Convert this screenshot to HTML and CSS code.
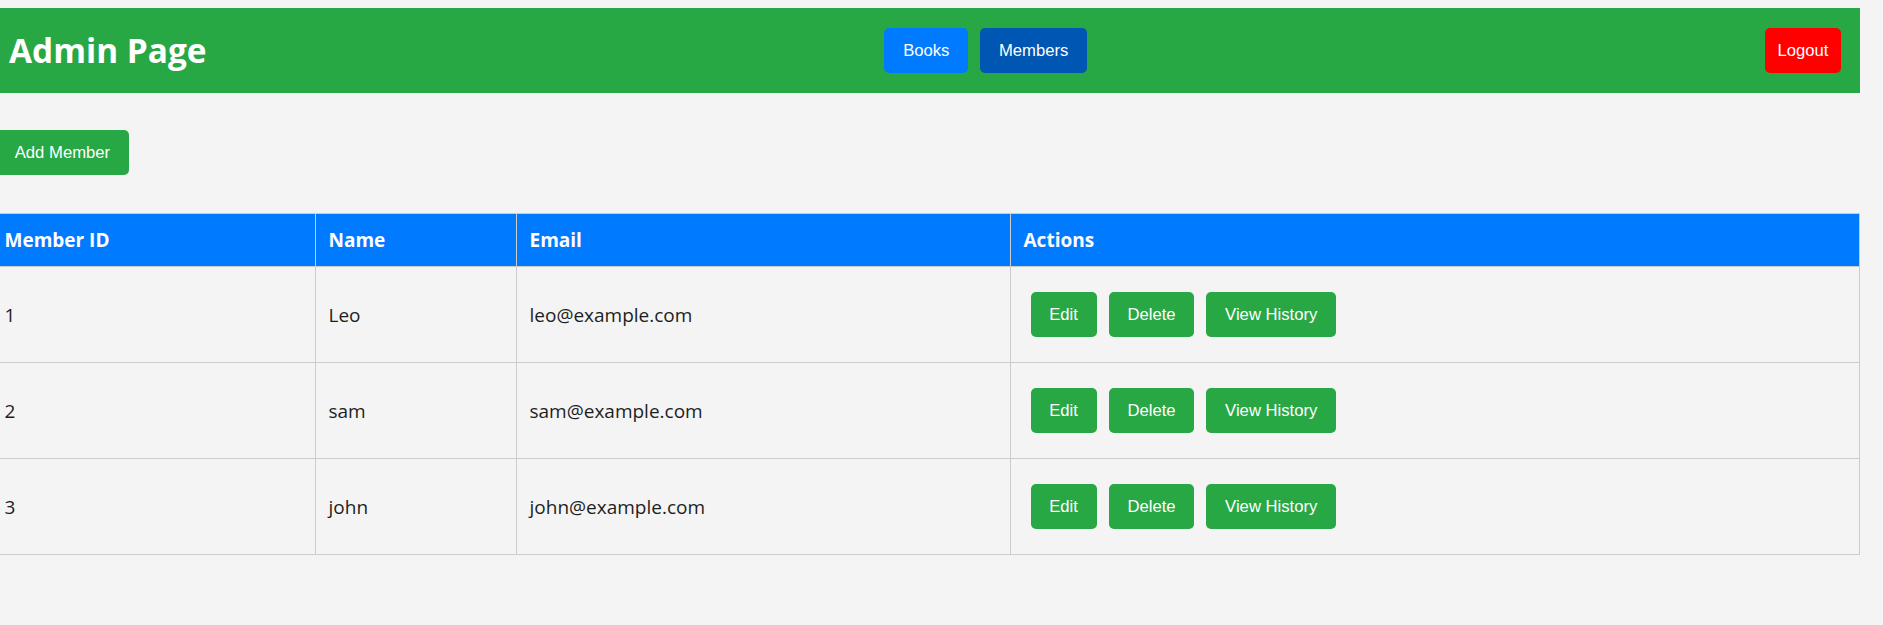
FILE: index.html
```html
<!DOCTYPE html>
<html lang="en">
<head>
<meta charset="utf-8">
<title>Admin Page</title>
<link rel="stylesheet" href="styles.css">
</head>
<body>
<header class="topbar">
  <h1 class="title">Admin Page</h1>
  <nav class="nav">
    <button class="btn btn-books">Books</button>
    <button class="btn btn-members">Members</button>
  </nav>
  <button class="btn btn-logout">Logout</button>
</header>
<main>
  <div class="toolbar">
    <button class="btn btn-green">Add Member</button>
  </div>
  <table class="members">
    <colgroup>
      <col class="c-id">
      <col class="c-name">
      <col class="c-email">
      <col class="c-actions">
    </colgroup>
    <thead>
      <tr><th>Member ID</th><th>Name</th><th>Email</th><th>Actions</th></tr>
    </thead>
    <tbody>
      <tr>
        <td>1</td><td>Leo</td><td>leo@example.com</td>
        <td><div class="actions"><button class="btn btn-green">Edit</button><button class="btn btn-green">Delete</button><button class="btn btn-green">View History</button></div></td>
      </tr>
      <tr>
        <td>2</td><td>sam</td><td>sam@example.com</td>
        <td><div class="actions"><button class="btn btn-green">Edit</button><button class="btn btn-green">Delete</button><button class="btn btn-green">View History</button></div></td>
      </tr>
      <tr>
        <td>3</td><td>john</td><td>john@example.com</td>
        <td><div class="actions"><button class="btn btn-green">Edit</button><button class="btn btn-green">Delete</button><button class="btn btn-green">View History</button></div></td>
      </tr>
    </tbody>
  </table>
</main>
</body>
</html>
```
FILE: styles.css
```css
html, body {
  background: #f4f4f4;
}
body {
  margin: 8px 23px 0 -9px;
  font-family: "Open Sans", "Noto Sans", sans-serif;
  color: #1e1e1e;
}
.topbar {
  height: 85px;
  background: #28a745;
  display: flex;
  align-items: center;
  justify-content: space-between;
  padding: 0 19px 0 18px;
}
.title {
  margin: 0;
  font-size: 33.4px;
  font-weight: 700;
  color: #fff;
  line-height: 1.2;
}
.nav {
  display: flex;
  gap: 12px;
}
.btn {
  font-family: "Liberation Sans", Arial, sans-serif;
  font-size: 16.67px;
  line-height: 19px;
  height: 45px;
  padding: 0 18.75px;
  border: none;
  border-radius: 5px;
  color: #fff;
  cursor: pointer;
}
.btn-books { background: #007bff; }
.btn-members { background: #0056b3; }
.btn-logout { background: #ff0000; padding: 0 12.5px; }
.btn-green { background: #28a745; }
.toolbar {
  display: flex;
  padding: 37px 0 38px 5px;
}
.members {
  width: 100%;
  border-collapse: collapse;
  table-layout: fixed;
  font-size: 19px;
}
.c-id { width: 324px; }
.c-name { width: 201px; }
.c-email { width: 494px; }
.members th,
.members td {
  border: 1px solid #ccc;
  padding: 0 12.5px;
  text-align: left;
  vertical-align: middle;
}
.members th {
  background: #007bff;
  color: #fff;
  font-weight: 700;
  height: 52px;
}
.members td {
  height: 95px;
}
.actions {
  display: flex;
  gap: 12px;
  padding-left: 7px;
}
```
